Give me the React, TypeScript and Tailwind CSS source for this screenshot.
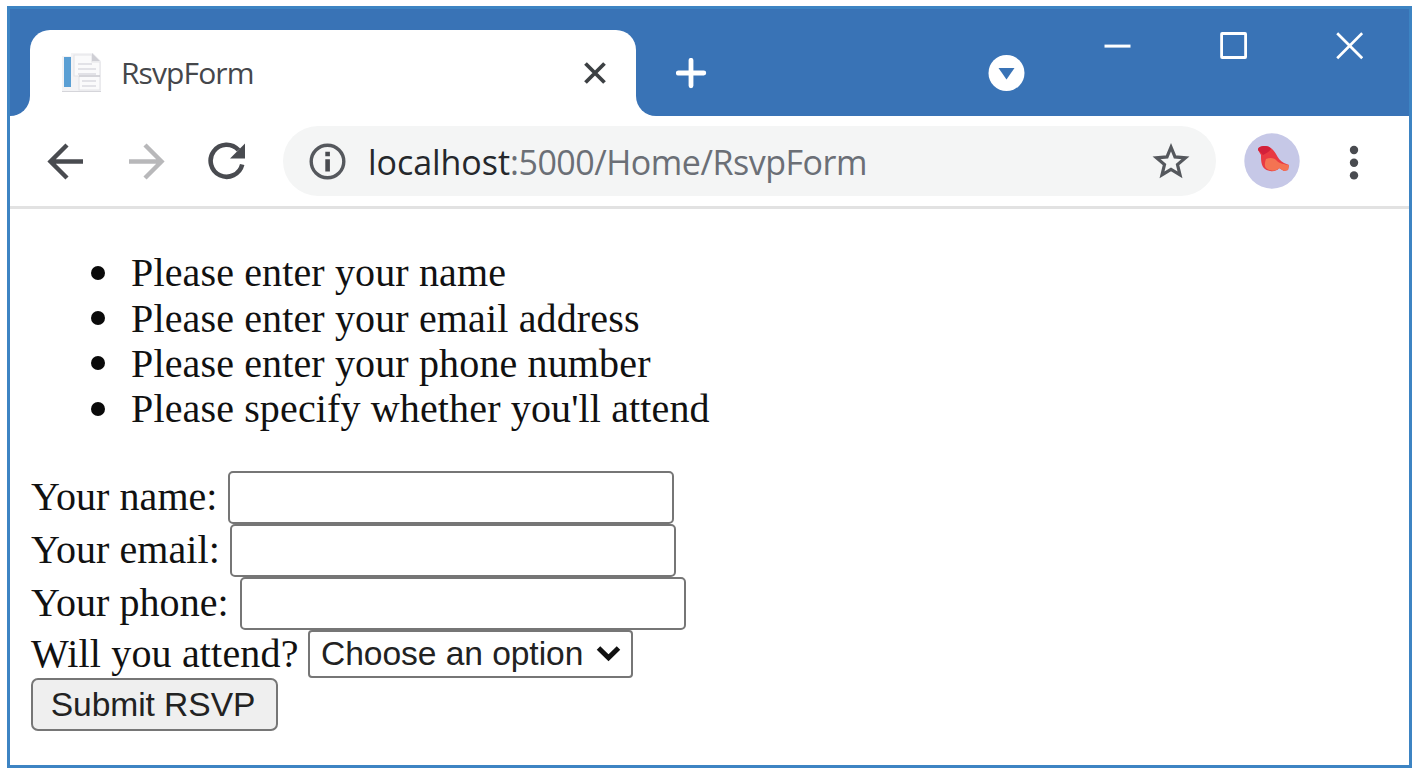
import type { ReactNode } from 'react';

const errors = [
  'Please enter your name',
  'Please enter your email address',
  'Please enter your phone number',
  "Please specify whether you'll attend",
];

const fields = [
  { id: 'name', label: 'Your name:', labelWidth: 'w-[197px]' },
  { id: 'email', label: 'Your email:', labelWidth: 'w-[199px]' },
  { id: 'phone', label: 'Your phone:', labelWidth: 'w-[209px]' },
];

function PageIcon() {
  return (
    <svg width="42" height="42" viewBox="0 0 42 42">
      <path d="M1 4h9V1h22l8 8v30H1z" fill="#f3f3f5" />
      <path d="M1 39h39v1H1z" fill="#d5d5da" />
      <rect x="3" y="5" width="7" height="30" fill="#5a9fd4" />
      <path d="M13 3h18v7h8v28H18V24h-5z" fill="#fafafb" stroke="#e4e4e8" strokeWidth="1.2" />
      <path d="M31 1v8h8z" fill="#cfcfd5" />
      <path d="M17 12h14M17 17h18M17 22h18M21 29h14M21 34h14" stroke="#e2e2e7" strokeWidth="2" />
      <path d="M18 24h21" stroke="#c9c9cf" strokeWidth="1.5" />
    </svg>
  );
}

function Tab() {
  return (
    <div className="w-[606px] bg-[#3973b6]">
      <div className="flex h-full items-center rounded-t-[20px] bg-white pl-[31px] pr-[29px]">
        <PageIcon />
        <span className="ml-[18px] flex-1 whitespace-nowrap font-['Open_Sans',sans-serif] text-[30px] leading-[40px] tracking-[-0.9px] text-[#45474b]">
          RsvpForm
        </span>
        <svg width="24" height="24" viewBox="0 0 24 24" stroke="#3c4043" strokeWidth="3.8">
          <path d="M2.5 2.5l19 19M21.5 2.5l-19 19" />
        </svg>
      </div>
    </div>
  );
}

function TitleBar() {
  return (
    <header>
      <div className="h-[21px] bg-[#3973b6]" />
      <div className="flex h-[86px] bg-white">
        <div className="w-[20px] rounded-br-[20px] bg-[#3973b6]" />
        <Tab />
        <div className="flex flex-1 items-start rounded-bl-[20px] bg-[#3973b6] pl-[40px]">
          <svg className="mt-[28px]" width="31" height="31" viewBox="0 0 31 31" stroke="#fff" strokeWidth="4.8">
            <path d="M15 2.300v25.500M2.300 15h25.500" strokeLinecap="round" />
          </svg>
          <svg className="ml-[281px] mt-[25px]" width="37" height="37" viewBox="0 0 37 37">
            <circle cx="18.500" cy="18" r="18" fill="#fff" />
            <path d="M10.500 13h16l-8 11.500z" fill="#3973b6" />
          </svg>
          <svg className="ml-[79px] mt-[2px]" width="27" height="28" viewBox="0 0 27 28">
            <path d="M0.500 14.100h26" stroke="#fff" strokeWidth="3" />
          </svg>
          <svg className="ml-[89px] mt-[2px]" width="27" height="28" viewBox="0 0 27 28">
            <rect x="1.600" y="1.500" width="24" height="24" rx="0.500" fill="none" stroke="#fff" strokeWidth="2.800" />
          </svg>
          <svg className="ml-[89px] mt-[2px]" width="27" height="28" viewBox="0 0 27 28">
            <path d="M1.200 1.200l25 25M26.200 1.200l-25 25" stroke="#fff" strokeWidth="2.700" />
          </svg>
        </div>
      </div>
    </header>
  );
}

function Toolbar() {
  return (
    <nav className="flex h-[93px] items-center border-b-[3px] border-[#e2e2e2] bg-white pl-[37px]">
      <svg width="37" height="37" viewBox="0 0 37 37" fill="none" stroke="#494b50" strokeWidth="4.4">
        <path d="M36 18.500H4M20 2L3.500 18.500 20 35" />
      </svg>
      <svg className="ml-[44px]" width="37" height="37" viewBox="0 0 37 37" fill="none" stroke="#b8b8ba" strokeWidth="4.4">
        <path d="M1 18.500h32M17 2l16.500 16.500L17 35" />
      </svg>
      <svg className="ml-[43px]" width="38" height="38" viewBox="0 0 38 38">
        <path d="M34.200 22.500A16 16 0 1 1 30.500 8" fill="none" stroke="#494b50" strokeWidth="4.600" />
        <path d="M37 1.500V16.500H22z" fill="#494b50" />
      </svg>
      <div className="ml-[37px] flex h-[70px] w-[933px] items-center rounded-full bg-[#f4f5f5] pl-[26px] pr-[26px]">
        <svg width="37" height="37" viewBox="0 0 37 37">
          <circle cx="18.500" cy="18.500" r="16.300" fill="none" stroke="#55585d" strokeWidth="3.400" />
          <path d="M16.300 8.800h4.600v4.400h-4.600zM16.300 16.300h4.600v12.200h-4.600z" fill="#494b50" />
        </svg>
        <div className="ml-[22px] flex flex-1 whitespace-nowrap pt-[2px] font-['Open_Sans',sans-serif] text-[34px] leading-[46px]">
          <span className="tracking-[-0.050px] text-[#25282c]">localhost</span>
          <span className="tracking-[-0.480px] text-[#6b6f76]">:5000/Home/RsvpForm</span>
        </div>
        <svg width="38" height="38" viewBox="0 0 38 38" fill="none" stroke="#55585d" strokeWidth="3.200">
          <path d="M19 5.200l4 9.700 10.500.9-8 6.800 2.500 10.300-9-5.500-9 5.500 2.500-10.300-8-6.800 10.500-.9z" />
        </svg>
      </div>
      <svg className="ml-[28px]" width="56" height="56" viewBox="0 0 56 56">
        <circle cx="28" cy="28" r="27.700" fill="#c6c8e7" />
        <path d="M14 17c0-3 3-4 7-4 5 0 9 4 11 8 2 4 4 7 8 9l5 2-1 5-4 1-5-3c-2 4-10 4-14 1-4-3-4-9-4-14z" fill="#e93a42" />
        <path d="M22 26c4-2 9-1 11 2 3 3 7 3 12 4l-1 5-4 1-5-3c-3 4-10 3-13 0-2-2-1-6 0-9z" fill="#f47352" />
        <path d="M14 17c0-3 3-4 7-4 3 0 5 1 6 3-2 3-5 4-8 6z" fill="#d3203a" />
      </svg>
      <svg className="ml-[49px] mt-[3px]" width="10" height="36" viewBox="0 0 10 36" fill="#494b50">
        <circle cx="5" cy="5" r="4.200" />
        <circle cx="5" cy="17.700" r="4.200" />
        <circle cx="5" cy="30.400" r="4.200" />
      </svg>
    </nav>
  );
}

function Row({ children }: { children: ReactNode }) {
  return <div className="flex h-[53px] items-center">{children}</div>;
}

export default function App() {
  return (
    <div className="h-[774px] w-[1418px] bg-white pl-[7px] pt-[6px]">
      <div className="h-[762px] w-[1405px] overflow-hidden border-[3.500px] border-[#3d84c3] bg-white">
        <TitleBar />
        <Toolbar />
        <main className="pl-[21px] pt-[41px] font-['Liberation_Serif',serif] text-[40px] text-[#111]">
          <ul>
            {errors.map((text) => (
              <li key={text} className="flex h-[45.400px] items-center pl-[60px]">
                <span className="mr-[25px] size-[14px] rounded-full bg-[#0a0a0a]" />
                <span className="whitespace-nowrap pl-px leading-[45px] tracking-[0.140px]">{text}</span>
              </li>
            ))}
          </ul>
          <form className="mt-[39px]">
            {fields.map((f) => (
              <Row key={f.id}>
                <label htmlFor={f.id} className={`whitespace-nowrap pb-[2px] leading-[45px] tracking-[0.060px] ${f.labelWidth}`}>
                  {f.label}
                </label>
                <input id={f.id} className="h-[53px] w-[446px] rounded-[5px] border-[2.500px] border-[#767676] bg-white px-2 outline-none" />
              </Row>
            ))}
            <div className="flex h-[48px] items-center">
              <label htmlFor="attend" className="w-[277px] whitespace-nowrap leading-[45px] tracking-[0.160px]">
                Will you attend?
              </label>
              <div className="relative">
                <select
                  id="attend"
                  className="block h-[48px] w-[325px] appearance-none rounded-[4px] border-[2.500px] border-[#767676] bg-white pl-[11px] pt-px font-['Liberation_Sans',sans-serif] text-[33.600px] leading-[40px] tracking-[-0.060px] text-[#222]"
                >
                  <option>Choose an option</option>
                </select>
                <svg className="pointer-events-none absolute right-[12px] top-[15px]" width="25" height="18" viewBox="0 0 25 18" fill="none" stroke="#111" strokeWidth="5">
                  <path d="M2.500 3l10 9.800 10-9.800" />
                </svg>
              </div>
            </div>
            <button
              type="button"
              className="block h-[53px] w-[247px] whitespace-nowrap rounded-[7px] border-[2.500px] border-[#767676] bg-[#efefef] pr-[3px] pt-[2px] font-['Liberation_Sans',sans-serif] text-[33.600px] leading-[40px] tracking-[-0.060px] text-[#222]"
            >
              Submit RSVP
            </button>
          </form>
        </main>
      </div>
    </div>
  );
}
